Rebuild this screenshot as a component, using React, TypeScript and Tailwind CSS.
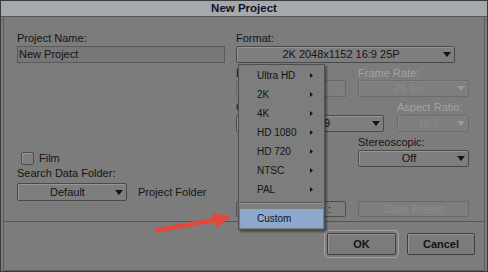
import React from "react";

function DownArrow({ disabled }: { disabled?: boolean }) {
  return (
    <svg width="8" height="5" viewBox="0 0 8 5">
      <path d="M0 0h8L4 5z" fill={disabled ? "#9a9a9a" : "#151515"} />
    </svg>
  );
}

function Drop({
  label,
  className = "",
  textClass = "text-center pl-[2px]",
  disabled,
  tall,
}: {
  label: string;
  className?: string;
  textClass?: string;
  disabled?: boolean;
  tall?: boolean;
}) {
  return (
    <div
      className={`flex items-center rounded-[2px] border bg-[#7e7e7e] ${tall ? "h-[18px]" : "h-[17px]"} ${
        disabled
          ? "border-[#6c6c6c] text-[#8b8b8b] shadow-[inset_1px_1px_0_#868686]"
          : "border-[#4a4a4a] text-[#151515] shadow-[inset_1px_1px_0_#969696]"
      } ${className}`}
    >
      <span className={`flex-1 leading-none whitespace-nowrap ${textClass}`}>{label}</span>
      <span className="mr-[3px] flex w-[8px] justify-center">
        <DownArrow disabled={disabled} />
      </span>
    </div>
  );
}

function Label({ text, disabled }: { text: string; disabled?: boolean }) {
  return (
    <div className={`h-[13px] leading-[13px] whitespace-nowrap ${disabled ? "text-[#a2a2a2]" : "text-[#141414]"}`}>
      {text}
    </div>
  );
}

function RightArrow() {
  return (
    <svg width="3" height="5" viewBox="0 0 3 5">
      <path d="M0 0l3 2.5L0 5z" fill="#151515" />
    </svg>
  );
}

const menuItems = ["Ultra HD", "2K", "4K", "HD 1080", "HD 720", "NTSC", "PAL"];

export default function App() {
  return (
    <div className="relative h-[272px] w-[488px] overflow-hidden border border-[#3b3b3b] bg-[#7c7c7c] font-['Liberation_Sans',Arial,sans-serif] text-[11px] text-[#141414]">
      {/* TITLE BAR */}
      <div className="flex h-[16px] items-center justify-center border-b border-[#555] bg-[#a5a9ad] text-[11.5px] font-bold text-[#0f1426]">
        New Project
      </div>

      {/* BODY */}
      <div className="mx-[2px] flex h-[254px] flex-col border-x border-b border-[#5e5e5e]">
        <div className="flex h-[205px] border-b border-[#565656] pl-[13px] pt-[15px]">
          {/* LEFT COLUMN */}
          <div className="w-[208px]">
            <Label text="Project Name:" />
            <div className="mt-[1px] flex h-[17px] items-center border border-[#5a5a5a] bg-[#777777] px-[1px] leading-none">
              New Project
            </div>

            <div className="mt-[89px] flex h-[13px] items-center">
              <div className="ml-[4px] h-[13px] w-[13px] rounded-[2px] border border-[#4d4d4d] bg-[#7f7f7f] shadow-[inset_1px_1px_0_#949494]" />
              <span className="ml-[5px] leading-none">Film</span>
            </div>
            <div className="mt-[2px]">
              <Label text="Search Data Folder:" />
            </div>
            <div className="mt-[3px] flex items-center">
              <Drop label="Default" tall className="w-[110px]" />
              <span className="ml-[11px] leading-none">Project Folder</span>
            </div>
          </div>

          {/* RIGHT COLUMN */}
          <div className="ml-[11px] w-[233px]">
            <Label text="Format:" />
            <Drop label="2K 2048x1152 16:9 25P" className="mt-[1px] w-[219px]" />

            <div className="mt-[4px] flex">
              <div className="w-[110px]">
                <Label text="F" />
                <div className="h-[17px] border border-[#6a6a6a] bg-[#7f7f7f]" />
              </div>
              <div className="ml-[12px] w-[111px]">
                <Label text="Frame Rate:" disabled />
                <Drop label="25 fps" disabled />
              </div>
            </div>

            <div className="mt-[4px] flex">
              <div className="w-[148px]">
                <Label text="C" />
                <Drop label="9" className="mt-[1px]" textClass="text-right pr-[42px]" />
              </div>
              <div className="ml-[13px] w-[72px]">
                <Label text="Aspect Ratio:" disabled />
                <Drop label="16:9" disabled className="mt-[1px]" />
              </div>
            </div>

            <div className="mt-[4px] pl-[122px]">
              <Label text="Stereoscopic:" />
              <Drop label="Off" className="mt-[1px] w-[111px]" />
            </div>

            <div className="mt-[34px] flex">
              <div className="flex h-[16px] w-[110px] items-center justify-end rounded-[2px] border border-[#4e4e4e] bg-[#7e7e7e] pr-[14px] leading-none">
                :
              </div>
              <div className="ml-[12px] flex h-[16px] w-[111px] items-center justify-center rounded-[2px] border border-[#6a6a6a] bg-[#7e7e7e] leading-none text-[#8c8c8c]">
                Save Preset
              </div>
            </div>
          </div>
        </div>

        {/* FOOTER */}
        <div className="flex flex-1 items-start justify-end gap-[11px] pr-[9px] pt-[11px]">
          <div className="flex h-[22px] w-[69px] items-center justify-center rounded-[2px] border border-[#3e3e3e] bg-[#7b7b7b] font-bold leading-none shadow-[inset_1px_1px_0_#959595,0_0_0_2px_#7c7c7c,0_0_0_3px_#a2a2a2]">
            OK
          </div>
          <div className="flex h-[22px] w-[68px] items-center justify-center rounded-[2px] border border-[#3e3e3e] bg-[#7b7b7b] font-bold leading-none shadow-[inset_1px_1px_0_#959595]">
            Cancel
          </div>
        </div>
      </div>

      {/* POPUP MENU */}
      <div className="absolute left-[237px] top-[63px] w-[87px] border border-[#4f4f4f] bg-[#7d7d7d] p-[1px] text-[10px] shadow-[2px_2px_2px_rgba(0,0,0,0.4)]">
        {menuItems.map((item) => (
          <div key={item} className="flex h-[19px] items-center justify-between pl-[17px] pr-[10px] leading-none">
            <span>{item}</span>
            <RightArrow />
          </div>
        ))}
        <div className="mx-[1px] mb-[5px] mt-[3px] h-[2px] border-b border-t border-b-[#999] border-t-[#555]" />
        <div className="flex h-[19px] items-center bg-[#8da8cd] pl-[17px] leading-none">Custom</div>
      </div>

      {/* RED ARROW */}
      <svg className="absolute left-[149px] top-[204px] overflow-visible" width="86" height="30" viewBox="0 0 86 30">
        <path d="M7 25.5L66 14.5" stroke="#e4473b" strokeWidth="4.5" strokeLinecap="round" />
        <path d="M62 7.5L81 12L66 23Z" fill="#e4473b" />
      </svg>
    </div>
  );
}
